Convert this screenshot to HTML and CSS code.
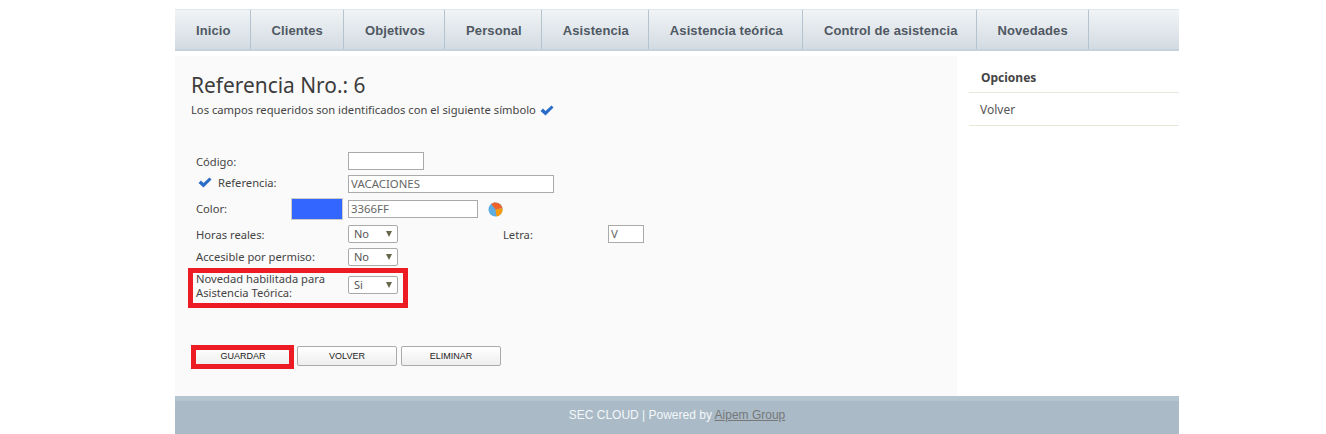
FILE: index.html
```html
<!DOCTYPE html>
<html lang="es">
<head>
    <meta charset="UTF-8">
    <title>Referencia Nro.: 6</title>
    <link rel="stylesheet" href="styles.css">
</head>
<body>
    <div class="wrapper">
        <ul class="nav">
            <li><a href="#">Inicio</a></li>
            <li class="nav-plus"><a href="#">Clientes</a></li>
            <li><a href="#">Objetivos</a></li>
            <li><a href="#">Personal</a></li>
            <li><a href="#">Asistencia</a></li>
            <li><a href="#">Asistencia teórica</a></li>
            <li class="nav-minus"><a href="#">Control de asistencia</a></li>
            <li class="nav-plus"><a href="#">Novedades</a></li>
        </ul>

        <div class="content">
            <div class="main">
                <h1>Referencia Nro.: 6</h1>
                <p class="hint">Los campos requeridos son identificados con el siguiente símbolo
                    <svg class="check" viewBox="0 0 14 11"><path d="M0.5 6 L3 3.5 L5.5 6 L11.5 0.5 L13.5 2.5 L5.5 10.5 Z"/></svg>
                </p>

                <form class="form">
                    <div class="row row-codigo">
                        <label>Código:</label>
                        <input type="text" class="input-sm">
                    </div>
                    <div class="row row-ref">
                        <label class="required">
                            <svg class="check" viewBox="0 0 14 11"><path d="M0.5 6 L3 3.5 L5.5 6 L11.5 0.5 L13.5 2.5 L5.5 10.5 Z"/></svg>
                            Referencia:
                        </label>
                        <input type="text" class="input-lg" value="VACACIONES">
                    </div>
                    <div class="row row-color">
                        <label class="label-color">Color:</label>
                        <span class="swatch"></span>
                        <input type="text" class="input-md" value="3366FF">
                        <svg class="wheel" viewBox="0 0 16 16">
                            <circle cx="8" cy="8" r="7.5" fill="#5dade2"/>
                            <path d="M8 8 L3.5 2 A7.5 7.5 0 0 1 15.3 6.3 Z" fill="#f0622c"/>
                            <path d="M8 8 L15.3 6.3 A7.5 7.5 0 0 1 9 15.4 Z" fill="#fb9a0c"/>
                        </svg>
                    </div>
                    <div class="row row-horas">
                        <label>Horas reales:</label>
                        <div class="select"><select><option>No</option><option>Si</option></select></div>
                        <label class="label-letra">Letra:</label>
                        <input type="text" class="input-xs" value="V">
                    </div>
                    <div class="row row-accesible">
                        <label>Accesible por permiso:</label>
                        <div class="select"><select><option>No</option><option>Si</option></select></div>
                    </div>
                    <div class="row row-novedad">
                        <label>Novedad habilitada para Asistencia Teórica:</label>
                        <div class="select"><select><option>Si</option><option>No</option></select></div>
                        <span class="mark mark-row"></span>
                    </div>
                    <div class="buttons">
                        <button type="button" class="btn">GUARDAR<span class="mark mark-btn"></span></button>
                        <button type="button" class="btn">VOLVER</button>
                        <button type="button" class="btn">ELIMINAR</button>
                    </div>
                </form>
            </div>

            <div class="sidebar">
                <h3>Opciones</h3>
                <a href="#">Volver</a>
            </div>
        </div>

        <div class="footer">SEC CLOUD | Powered by <a href="#">Aipem Group</a></div>
    </div>
</body>
</html>
```

FILE: styles.css
```css
body {
    margin: 0;
    background: white;
    font-family: "Noto Sans", sans-serif;
    font-size: 11.2px;
    color: #444;
}
.wrapper {
    width: 1004px;
    margin-left: 175px;
    padding-top: 9px;
}

/* menu */
.nav {
    display: flex;
    height: 39px;
    margin: 0;
    padding: 0;
    list-style: none;
    background: linear-gradient(#f1f4f6, #d3dbe2);
    border-top: 1px solid #dfe7ec;
    border-bottom: 2px solid #c6d3dc;
}
.nav li {
    border-right: 1px solid #b3c3cf;
}
.nav a {
    display: block;
    padding: 0 19px 0 21px;
    line-height: 41px;
    font-family: "Liberation Sans", sans-serif;
    font-size: 13px;
    font-weight: bold;
    letter-spacing: 0.1px;
    color: #4f5863;
    text-decoration: none;
}
.nav .nav-plus a { padding-right: 20px; }
.nav .nav-minus a { padding-right: 18px; }

.content {
    display: flex;
    justify-content: space-between;
    margin-top: 5px;
}
.main {
    box-sizing: border-box;
    width: 782px;
    height: 340px;
    padding: 15px 16px 0;
    background: #fafafa;
}
h1 {
    margin: 0 0 1px;
    font-size: 20.9px;
    font-weight: normal;
    line-height: 29px;
    color: #3c3c3c;
}
.hint {
    margin: 0;
    line-height: 18px;
}
.check {
    width: 14px;
    height: 11px;
    margin-left: 1px;
    vertical-align: -2px;
    fill: #2a6cc7;
}

/* form */
.form {
    margin-top: 33px;
}
.row {
    position: relative;
    display: flex;
    align-items: center;
    padding-left: 5px;
}
.row label {
    width: 152px;
    line-height: 14px;
}
.row-codigo { height: 18px; }
.row-ref { height: 18px; margin-top: 5px; }
.row-color { height: 20px; margin-top: 6px; }
.row-horas { height: 18px; margin-top: 6px; }
.row-accesible { height: 18px; margin-top: 5px; }
.row-novedad { height: 28px; margin-top: 5px; }

.row-codigo label,
.row-horas label {
    margin-top: 2px;
}
.row .required {
    display: flex;
    align-items: center;
    gap: 6px;
    margin-top: -3px;
}
.required .check {
    margin-left: 2px;
}
.row-novedad label {
    margin-top: 1px;
}
.row .label-color { width: 95px; }
.row .label-letra { width: 105px; margin-left: 105px; }

input {
    box-sizing: border-box;
    height: 18px;
    padding: 0 2px 2px;
    border: 1px solid #aaa;
    background: white;
    font-family: "Noto Sans", sans-serif;
    font-size: 11.4px;
    color: #666;
}
.input-xs { width: 36px; }
.input-sm { width: 76px; }
.input-md { width: 130px; }
.input-lg { width: 206px; }
.swatch {
    box-sizing: border-box;
    flex-shrink: 0;
    width: 52px;
    height: 22px;
    margin-right: 5px;
    background: #3366ff;
    border: 1px solid #ccc;
}
.wheel {
    width: 15px;
    height: 15px;
    margin-left: 10px;
}

.select {
    position: relative;
    width: 50px;
    height: 18px;
}
.select select {
    box-sizing: border-box;
    width: 100%;
    height: 100%;
    padding: 0 0 2px 5px;
    border: 1px solid #aaa;
    border-radius: 2px;
    background: white;
    font-family: "Noto Sans", sans-serif;
    font-size: 11px;
    color: #555;
    appearance: none;
}
.select::after {
    content: "";
    position: absolute;
    top: 6px;
    right: 6px;
    border-top: 6px solid #66664a;
    border-left: 3px solid transparent;
    border-right: 3px solid transparent;
}

/* botones */
.buttons {
    display: flex;
    gap: 4px;
    margin: 47px 0 0 2px;
}
.btn {
    position: relative;
    box-sizing: border-box;
    width: 100px;
    height: 20px;
    padding: 0;
    border: 1px solid #aaa;
    border-radius: 2px;
    background: linear-gradient(#fff, #eee);
    font-family: "Liberation Sans", sans-serif;
    font-size: 9px;
    color: #222;
}

/* marcas rojas sobre la captura */
.mark {
    position: absolute;
    box-sizing: border-box;
    border: 5px solid #ed1c24;
    pointer-events: none;
}
.mark-row {
    left: -3px;
    top: -3px;
    width: 220px;
    height: 40px;
}
.mark-btn {
    left: -3px;
    top: -2px;
    width: 103px;
    height: 24px;
}

/* lateral */
.sidebar {
    width: 210px;
    padding-top: 13px;
}
.sidebar h3 {
    margin: 0;
    padding: 0 12px;
    height: 23px;
    font-size: 12px;
    line-height: 18px;
    color: #444;
    border-bottom: 1px solid #e8e8d8;
}
.sidebar a {
    display: block;
    height: 32px;
    padding-left: 11px;
    line-height: 34px;
    font-size: 12px;
    color: #555;
    text-decoration: none;
    border-bottom: 1px solid #e8e8d8;
}

.footer {
    box-sizing: border-box;
    height: 38px;
    padding-top: 5px;
    background: #aabbc7;
    border-top: 5px solid #b5c5cf;
    font-family: "Liberation Sans", sans-serif;
    font-size: 12px;
    line-height: 18px;
    text-align: center;
    color: #f4f7f9;
}
.footer a {
    color: #777;
}
```
